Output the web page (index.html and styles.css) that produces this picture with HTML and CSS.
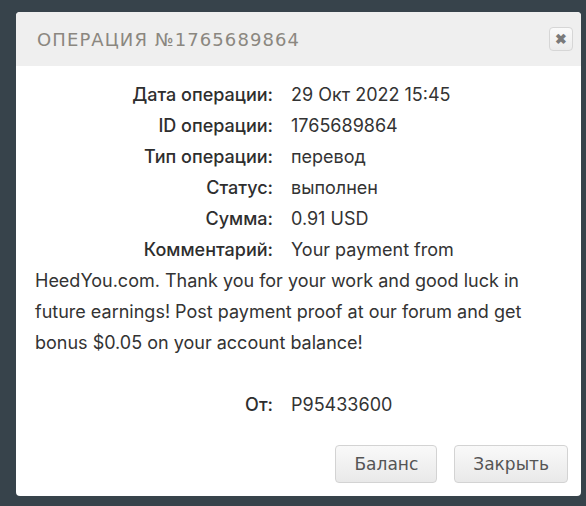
FILE: index.html
```html
<!DOCTYPE html>
<html>
<head>
  <meta charset="utf-8">
  <link rel="stylesheet" href="styles.css">
</head>
<body>
  <div class="backdrop">
    <div class="dialog">
      <div class="dialog-header">
        <span class="dialog-title">Операция №1765689864</span>
        <button class="close-btn" aria-label="close">&#10006;</button>
      </div>

      <div class="dialog-body">
        <div class="row"><span class="label">Дата операции:</span>29 Окт 2022 15:45</div>
        <div class="row"><span class="label">ID операции:</span>1765689864</div>
        <div class="row"><span class="label">Тип операции:</span>перевод</div>
        <div class="row"><span class="label">Статус:</span>выполнен</div>
        <div class="row"><span class="label">Сумма:</span>0.91 USD</div>
        <div class="row"><span class="label">Комментарий:</span>Your payment from HeedYou.com. Thank you for your work and good luck in future earnings! Post payment proof at our forum and get bonus $0.05 on your account balance!</div>
        <div class="row spacer"></div>
        <div class="row"><span class="label">От:</span>P95433600</div>
      </div>

      <div class="dialog-footer">
        <button class="btn">Баланс</button>
        <button class="btn">Закрыть</button>
      </div>
    </div>
  </div>
</body>
</html>
```

FILE: styles.css
```css
body {
  margin: 0;
  padding: 0;
  background-color: #37434b;
  font-family: Inter, "Noto Sans", sans-serif;
}

.backdrop {
  padding: 12px 5px 0 16px;
}

.dialog {
  width: 565px;
  background-color: #fff;
  border-radius: 4px;
  overflow: hidden;
}

.dialog-header {
  display: flex;
  align-items: center;
  justify-content: space-between;
  height: 54px;
  padding: 0 8px 0 21px;
  background-color: #efefef;
}

.dialog-title {
  font-family: "DejaVu Sans", sans-serif;
  font-size: 18px;
  text-transform: uppercase;
  letter-spacing: 1.1px;
  color: #8b8780;
}

.close-btn {
  width: 24px;
  height: 24px;
  padding: 0;
  border: 1px solid #d6d6d6;
  border-radius: 4px;
  background: linear-gradient(#fafafa, #ececec);
  color: #7a7a7a;
  font-size: 14px;
  font-weight: bold;
  line-height: 22px;
}

.dialog-body {
  padding: 13px 40px 0 19px;
  font-size: 18px;
  color: #333;
}

.row {
  line-height: 31px;
}

.spacer {
  height: 31px;
}

.label {
  display: inline-block;
  width: 238px;
  margin-right: 18px;
  text-align: right;
  font-weight: 500;
  color: #2e2e2e;
}

.dialog-footer {
  display: flex;
  justify-content: flex-end;
  gap: 17px;
  padding: 25px 13px 13px 0;
}

.btn {
  height: 38px;
  padding: 0 18px;
  border: 1px solid #d3d3d3;
  border-radius: 4px;
  background: linear-gradient(#f9f9f9, #e9e9e9);
  font-family: "DejaVu Sans", sans-serif;
  font-size: 17px;
  color: #555;
}
```
